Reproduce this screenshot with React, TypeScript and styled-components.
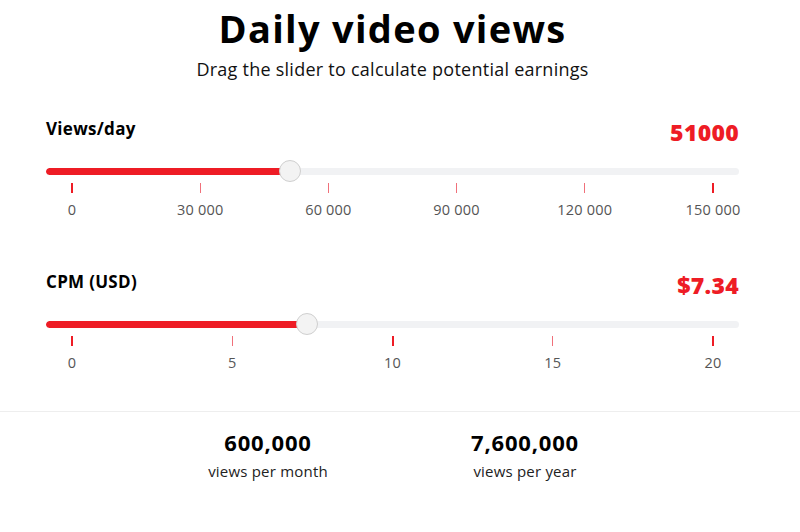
import React from "react";
import styled, { createGlobalStyle } from "styled-components";

const RED = "#ee1c25";

const Global = createGlobalStyle`
  html, body { margin: 0; padding: 0; background: #fff; }
  body { font-family: "Open Sans", "Noto Sans", sans-serif; color: #111; }
  * { box-sizing: border-box; }
`;

const Page = styled.div`
  width: 800px;
  height: 532px;
  overflow: hidden;
  background: #fff;
`;

const Content = styled.div`
  width: 785px;
  padding: 0 46px;
`;

const Title = styled.h1`
  margin: 0;
  padding-top: 3px;
  height: 54px;
  line-height: 50px;
  font-size: 38px;
  font-weight: 700;
  text-align: center;
  color: #000;
  letter-spacing: 1.3px;
`;

const Subtitle = styled.p`
  margin: 0;
  height: 32px;
  line-height: 30px;
  font-size: 18px;
  font-weight: 400;
  text-align: center;
  color: #111;
  letter-spacing: 0.25px;
`;

const Section = styled.section<{ $top: number }>`
  padding-top: ${(p) => p.$top}px;
`;

const Header = styled.div`
  display: flex;
  justify-content: space-between;
  align-items: center;
  height: 30px;
`;

const Label = styled.span`
  font-size: 17px;
  font-weight: 700;
  color: #000;
  letter-spacing: 0.3px;
  position: relative;
  top: -2px;
`;

const Value = styled.span`
  font-size: 23px;
  font-weight: 800;
  color: ${RED};
  letter-spacing: 0.3px;
  position: relative;
  top: 2px;
`;

const TrackArea = styled.div`
  position: relative;
  height: 22px;
  margin-top: 15px;
  display: flex;
  align-items: center;
`;

const Track = styled.div`
  width: 100%;
  height: 7px;
  border-radius: 4px;
  background: #f1f2f4;
  overflow: hidden;
`;

const Fill = styled.div`
  height: 100%;
  background: ${RED};
  border-radius: 4px 0 0 4px;
`;

const Thumb = styled.div`
  position: absolute;
  top: 0;
  width: 22px;
  height: 22px;
  border-radius: 50%;
  background: #f3f3f3;
  border: 1.5px solid #cfcfcf;
`;

const Ticks = styled.div`
  display: flex;
  justify-content: space-between;
  margin: 1px 26px 0;
`;

const TickItem = styled.div`
  width: 0;
  display: flex;
  flex-direction: column;
  align-items: center;
`;

const TickMark = styled.div<{ $strong: boolean }>`
  width: ${(p) => (p.$strong ? 2 : 1)}px;
  height: 10px;
  background: ${(p) => (p.$strong ? RED : "#f0707a")};
`;

const TickLabel = styled.span`
  margin-top: 7px;
  font-size: 14.5px;
  line-height: 20px;
  color: #555;
  white-space: nowrap;
  letter-spacing: 0.2px;
`;

const Spacer = styled.div`
  height: 38px;
`;

const Divider = styled.hr`
  margin: 0;
  border: 0;
  border-top: 1.5px solid #eeeeee;
  width: 800px;
`;

const Stats = styled.div`
  display: grid;
  grid-template-columns: repeat(2, 257px);
  justify-content: center;
  width: 785px;
  padding-left: 8px;
  padding-top: 16px;
`;

const Stat = styled.div`
  display: flex;
  flex-direction: column;
  align-items: center;
`;

const StatValue = styled.span`
  font-size: 22px;
  font-weight: 700;
  color: #000;
  line-height: 28px;
  letter-spacing: 0.8px;
`;

const StatLabel = styled.span`
  margin-top: 4px;
  font-size: 15px;
  color: #222;
  line-height: 22px;
  letter-spacing: 0.2px;
`;

type SliderProps = {
  label: string;
  display: string;
  ratio: number;
  ticks: string[];
  top: number;
  strongIdx: number[];
};

const SPAN = 641;
const INSET = 26;

function Slider({ label, display, ratio, ticks, top, strongIdx }: SliderProps) {
  const center = INSET + ratio * SPAN;
  return (
    <Section $top={top}>
      <Header>
        <Label>{label}</Label>
        <Value>{display}</Value>
      </Header>
      <TrackArea>
        <Track>
          <Fill style={{ width: `${center}px` }} />
        </Track>
        <Thumb style={{ left: `${center - 11}px` }} />
      </TrackArea>
      <Ticks>
        {ticks.map((t, i) => (
          <TickItem key={t}>
            <TickMark $strong={strongIdx.includes(i)} />
            <TickLabel>{t}</TickLabel>
          </TickItem>
        ))}
      </Ticks>
    </Section>
  );
}

export default function App() {
  return (
    <Page>
      <Global />
      <Content>
        <Title>Daily video views</Title>
        <Subtitle>Drag the slider to calculate potential earnings</Subtitle>
        <Slider
          label="Views/day"
          display="51000"
          ratio={51000 / 150000}
          ticks={["0", "30 000", "60 000", "90 000", "120 000", "150 000"]}
          top={29}
          strongIdx={[0, 5]}
        />
        <Slider
          label="CPM (USD)"
          display="$7.34"
          ratio={7.34 / 20}
          ticks={["0", "5", "10", "15", "20"]}
          top={48}
          strongIdx={[0, 2, 4]}
        />
      </Content>
      <Spacer />
      <Divider />
      <Stats>
        <Stat>
          <StatValue>600,000</StatValue>
          <StatLabel>views per month</StatLabel>
        </Stat>
        <Stat>
          <StatValue>7,600,000</StatValue>
          <StatLabel>views per year</StatLabel>
        </Stat>
      </Stats>
    </Page>
  );
}
